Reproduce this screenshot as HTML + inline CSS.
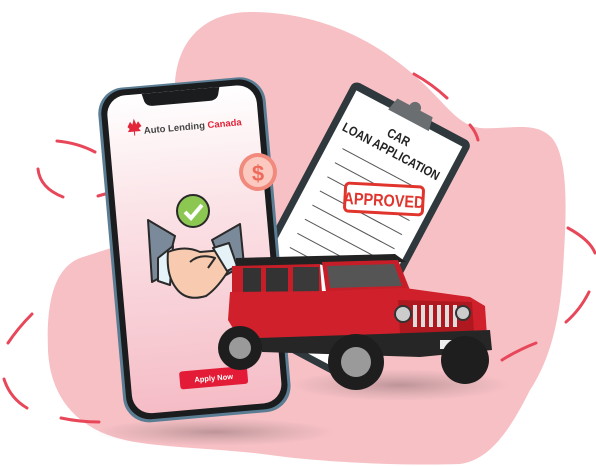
<!DOCTYPE html>
<html><head><style>
html,body{margin:0;padding:0;background:#fff;}
svg{display:block}
text{font-family:"Liberation Sans",sans-serif}
</style></head><body>
<svg width="596" height="466" viewBox="0 0 596 466" xmlns="http://www.w3.org/2000/svg">
<defs>
<linearGradient id="scr" x1="0" y1="0" x2="0" y2="1">
<stop offset="0" stop-color="#ffffff"/><stop offset="0.35" stop-color="#fbe4e8"/><stop offset="1" stop-color="#f5bcc6"/></linearGradient>
<radialGradient id="sh" cx="0.5" cy="0.5" r="0.5"><stop offset="0" stop-color="#b0898d" stop-opacity="0.8"/><stop offset="1" stop-color="#b89a9d" stop-opacity="0"/></radialGradient>
</defs>
<!-- blob -->
<path d="M175,83 C178,35 210,12 250,12 C320,12 380,40 430,90 C450,110 460,125 480,128 C510,130 535,120 552,138 C570,160 566,220 563,270 C560,320 550,360 530,390 C510,430 490,460 460,464 C400,466 320,462 270,455 C220,448 160,448 125,440 C80,430 50,400 48,350 C46,300 55,268 80,258 C110,248 150,240 165,205 C175,170 173,120 175,83 Z" fill="#f7c0c5"/>
<!-- dashes -->
<g stroke="#e8475a" stroke-width="3" fill="none" stroke-linecap="round">
<path d="M414,74 Q432,84 447,98"/>
<path d="M470,125 Q476,132 478,140"/>
<path d="M57,141 Q78,143 95,152"/>
<path d="M38,169 Q40,188 63,197"/>
<path d="M98,196 L105,194"/>
<path d="M568,228 Q590,240 595,253"/>
<path d="M589,292 Q580,310 566,322"/>
<path d="M502,360 Q518,350 536,343"/>
<path d="M32,314 Q18,328 8,343"/>
<path d="M4,379 Q10,398 27,408"/>
<path d="M61,418 Q80,422 99,422"/>
</g>
<!-- shadow -->
<ellipse cx="215" cy="432" rx="120" ry="14" fill="url(#sh)"/>
<ellipse cx="400" cy="385" rx="110" ry="16" fill="url(#sh)"/>
<!-- clipboard -->
<g transform="translate(354,80) rotate(28)">
<rect x="0" y="0" width="134" height="270" rx="7" fill="#2f383d"/>
<rect x="7" y="8" width="120" height="255" fill="#fff"/>
<path d="M47,-4 L87,-4 L90,10 L44,10 Z" fill="#6b6e70"/>
<circle cx="67" cy="-4" r="6" fill="#6b6e70"/>
<text x="78" y="34" font-size="13" font-weight="bold" text-anchor="middle" fill="#222" transform="scale(0.85,1)">CAR</text>
<text x="78" y="50" font-size="13" font-weight="bold" text-anchor="middle" fill="#222" transform="scale(0.85,1)">LOAN APPLICATION</text>
<g stroke="#555" stroke-width="1">
<line x1="22" y1="66" x2="115" y2="66"/><line x1="22" y1="82" x2="115" y2="82"/><line x1="22" y1="98" x2="115" y2="98"/><line x1="22" y1="114" x2="115" y2="114"/><line x1="22" y1="130" x2="115" y2="130"/><line x1="22" y1="146" x2="115" y2="146"/><line x1="22" y1="162" x2="115" y2="162"/><line x1="22" y1="178" x2="115" y2="178"/>
</g>
</g>
<g transform="translate(384,199) rotate(3)">
<rect x="-39" y="-14" width="78" height="28" rx="4" fill="#fff" stroke="#e0342c" stroke-width="3"/>
<text x="0" y="7" font-size="17" font-weight="bold" text-anchor="middle" fill="#e0342c" transform="scale(0.85,1)">APPROVED</text>
</g>
<!-- phone -->
<g transform="rotate(-5 192 245)">
<rect x="110" y="82" width="168" height="336" rx="26" fill="#5a7d93"/>
<rect x="113" y="84" width="162" height="331" rx="24" fill="#1a1c1e"/>
<rect x="119" y="90" width="150" height="319" rx="19" fill="url(#scr)"/>
<path d="M155,90 L233,90 L231,98 Q229,103 222,103 L166,103 Q159,103 157,98 Z" fill="#1a1c1e"/>
<path d="M138,122 l3,-5 2,3 2,-6 2,6 2,-3 3,5 -3,2 2,3 -6,0 0,4 -1,0 0,-4 -6,0 2,-3z" fill="#e3263a"/>
<text x="154" y="130" font-size="9.5" font-weight="bold" fill="#444">Auto Lending <tspan fill="#e3263a">Canada</tspan></text>
<rect x="168" y="370" width="68" height="18" rx="3" fill="#e31b36"/>
<text x="202" y="382" font-size="7.5" font-weight="bold" text-anchor="middle" fill="#fff">Apply Now</text>
</g>
<!-- coin -->
<circle cx="258" cy="172" r="19" fill="#f18a7c"/>
<circle cx="258" cy="172" r="15" fill="#fbc9c0"/>
<text x="258" y="181" font-size="22" font-weight="bold" text-anchor="middle" fill="#ef6a5b">$</text>
<!-- check -->
<circle cx="193" cy="211" r="16" fill="#8cc751" stroke="#2a2a2a" stroke-width="2"/>
<path d="M185,212 L191,218 L202,205" stroke="#fff" stroke-width="4" fill="none"/>
<!-- handshake -->
<g stroke="#2a2a2a" stroke-width="2" stroke-linejoin="round">
<path d="M148,220 L175,236 L165,275 L152,282 Z" fill="#7b8a9a"/>
<path d="M240,224 L212,240 L226,275 L244,265 Z" fill="#7b8a9a"/>
<path d="M158,258 L173,246 L170,285 L158,281Z" fill="#e5f2f8"/>
<path d="M168,252 Q185,245 200,252 L224,250 L230,268 Q218,288 206,296 Q186,302 176,288 Q166,275 168,252 Z" fill="#f8cbb0"/>
<path d="M190,262 Q200,253 215,258 L208,268" fill="none"/>
<path d="M213,248 L229,243 L237,266 L227,271 Z" fill="#e5f2f8"/>
</g>
<!-- jeep -->
<g>
<path d="M236,258 L395,254 L406,262 L236,267 Z" fill="#222"/>
<path d="M232,266 L320,264 L322,292 L232,294 Z" fill="#c61e28"/>
<rect x="243" y="268" width="18" height="24" fill="#333"/>
<rect x="266" y="268" width="22" height="25" fill="#333"/>
<rect x="293" y="267" width="26" height="26" fill="#3a3a3a"/>
<path d="M322,262 L398,260 L410,290 L326,292 Z" fill="#c61e28"/>
<path d="M327,266 L394,264 L402,286 L330,288 Z" fill="#555"/>
<path d="M230,292 L326,291 L405,288 L470,297 L485,306 L487,336 L380,342 L240,340 L228,320 Z" fill="#d0202b"/>
<path d="M398,300 L472,302 L474,332 L400,334 Z" fill="#b01820"/>
<g fill="#ddd"><rect x="413" y="305" width="4" height="22"/><rect x="421" y="305" width="4" height="22"/><rect x="429" y="305" width="4" height="22"/><rect x="437" y="305" width="4" height="22"/><rect x="445" y="305" width="4" height="22"/><rect x="453" y="305" width="4" height="22"/></g>
<circle cx="403" cy="314" r="8" fill="#ccc" stroke="#333" stroke-width="2"/>
<circle cx="463" cy="313" r="7" fill="#ccc" stroke="#333" stroke-width="2"/>
<path d="M258,338 L380,334 L490,330 L492,350 L420,357 L262,352 Z" fill="#262626"/>
<rect x="440" y="340" width="26" height="9" fill="#eee"/>
<circle cx="240" cy="348" r="22" fill="#1e1e1e"/><circle cx="240" cy="348" r="11" fill="#9a9a9a"/>
<circle cx="356" cy="362" r="28" fill="#1e1e1e"/><circle cx="356" cy="362" r="15" fill="#9a9a9a"/>
<circle cx="465" cy="360" r="24" fill="#1e1e1e"/>
</g>
</svg>
</body></html>
